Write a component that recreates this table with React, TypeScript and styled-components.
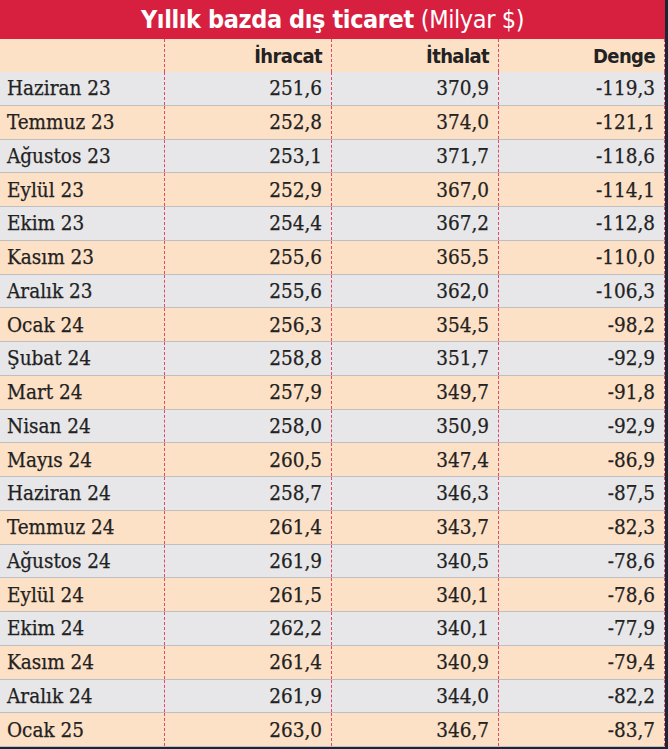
import React from 'react';
import styled, {createGlobalStyle} from 'styled-components';

const GlobalStyle = createGlobalStyle`
body {
margin: 0;
background: #1b2634;
}
`;

const Frame = styled.div`
width: 665px;
height: 747px;
border-right: 3px solid #1b2634;
border-bottom: 2px solid #1b2634;
background: #fde1c6;
display: flex;
flex-direction: column;
overflow: hidden;
`;

const Title = styled.div`
height: 39px;
background-color: #d71f40;
color: white;
display: flex;
align-items: center;
justify-content: center;
font-family: "DejaVu Sans Condensed", "Roboto Condensed", Roboto, sans-serif;
font-size: 25px;
font-weight: 700;
letter-spacing: -0.4px;
`;

const Unit = styled.span`
font-weight: 400;
margin-left: 7px;
`;

const Row = styled.div<{$shade: 'head' | 'peach' | 'grey'}>`
display: grid;
grid-template-columns: 165px 167px 167px 166px;
height: ${(props) => (props.$shade === 'head' ? '33px' : '33.75px')};
box-sizing: border-box;
background-color: ${(props) => (props.$shade === 'grey' ? '#e7e7e9' : '#fde1c6')};
border-bottom: ${(props) => (props.$shade === 'head' ? 'none' : '1.5px solid #bfbfc2')};
`;

const Cell = styled.div<{$label?: boolean}>`
display: flex;
align-items: center;
justify-content: ${(props) => (props.$label ? 'flex-start' : 'flex-end')};
padding: ${(props) => (props.$label ? '0 0 0 7px' : '0 9px 0 0')};
border-right: 1px dashed #e04a66;
color: #222;
font-family: "DejaVu Serif Condensed", "DejaVu Serif", serif;
font-size: 20.5px;
-webkit-text-stroke: 0.25px #222;
white-space: nowrap;
`;

const HeadCell = styled(Cell)`
font-family: "DejaVu Sans Condensed", "Roboto Condensed", Roboto, sans-serif;
font-weight: 700;
font-size: 20px;
letter-spacing: -0.6px;
-webkit-text-stroke: 0;
`;

const rows: [string, string, string, string][] = [
    ['Haziran 23', '251,6', '370,9', '-119,3'],
    ['Temmuz 23', '252,8', '374,0', '-121,1'],
    ['Ağustos 23', '253,1', '371,7', '-118,6'],
    ['Eylül 23', '252,9', '367,0', '-114,1'],
    ['Ekim 23', '254,4', '367,2', '-112,8'],
    ['Kasım 23', '255,6', '365,5', '-110,0'],
    ['Aralık 23', '255,6', '362,0', '-106,3'],
    ['Ocak 24', '256,3', '354,5', '-98,2'],
    ['Şubat 24', '258,8', '351,7', '-92,9'],
    ['Mart 24', '257,9', '349,7', '-91,8'],
    ['Nisan 24', '258,0', '350,9', '-92,9'],
    ['Mayıs 24', '260,5', '347,4', '-86,9'],
    ['Haziran 24', '258,7', '346,3', '-87,5'],
    ['Temmuz 24', '261,4', '343,7', '-82,3'],
    ['Ağustos 24', '261,9', '340,5', '-78,6'],
    ['Eylül 24', '261,5', '340,1', '-78,6'],
    ['Ekim 24', '262,2', '340,1', '-77,9'],
    ['Kasım 24', '261,4', '340,9', '-79,4'],
    ['Aralık 24', '261,9', '344,0', '-82,2'],
    ['Ocak 25', '263,0', '346,7', '-83,7'],
];

const App = () => {
    return (
        <>
            <GlobalStyle />
            <Frame>
                <Title>
                    Yıllık bazda dış ticaret<Unit>(Milyar $)</Unit>
                </Title>
                <Row $shade="head">
                    <HeadCell $label />
                    <HeadCell>İhracat</HeadCell>
                    <HeadCell>İthalat</HeadCell>
                    <HeadCell>Denge</HeadCell>
                </Row>
                {rows.map(([month, exp, imp, bal], i) => (
                    <Row key={month} $shade={i % 2 === 0 ? 'grey' : 'peach'}>
                        <Cell $label>{month}</Cell>
                        <Cell>{exp}</Cell>
                        <Cell>{imp}</Cell>
                        <Cell>{bal}</Cell>
                    </Row>
                ))}
            </Frame>
        </>
    );
};

export default App;
